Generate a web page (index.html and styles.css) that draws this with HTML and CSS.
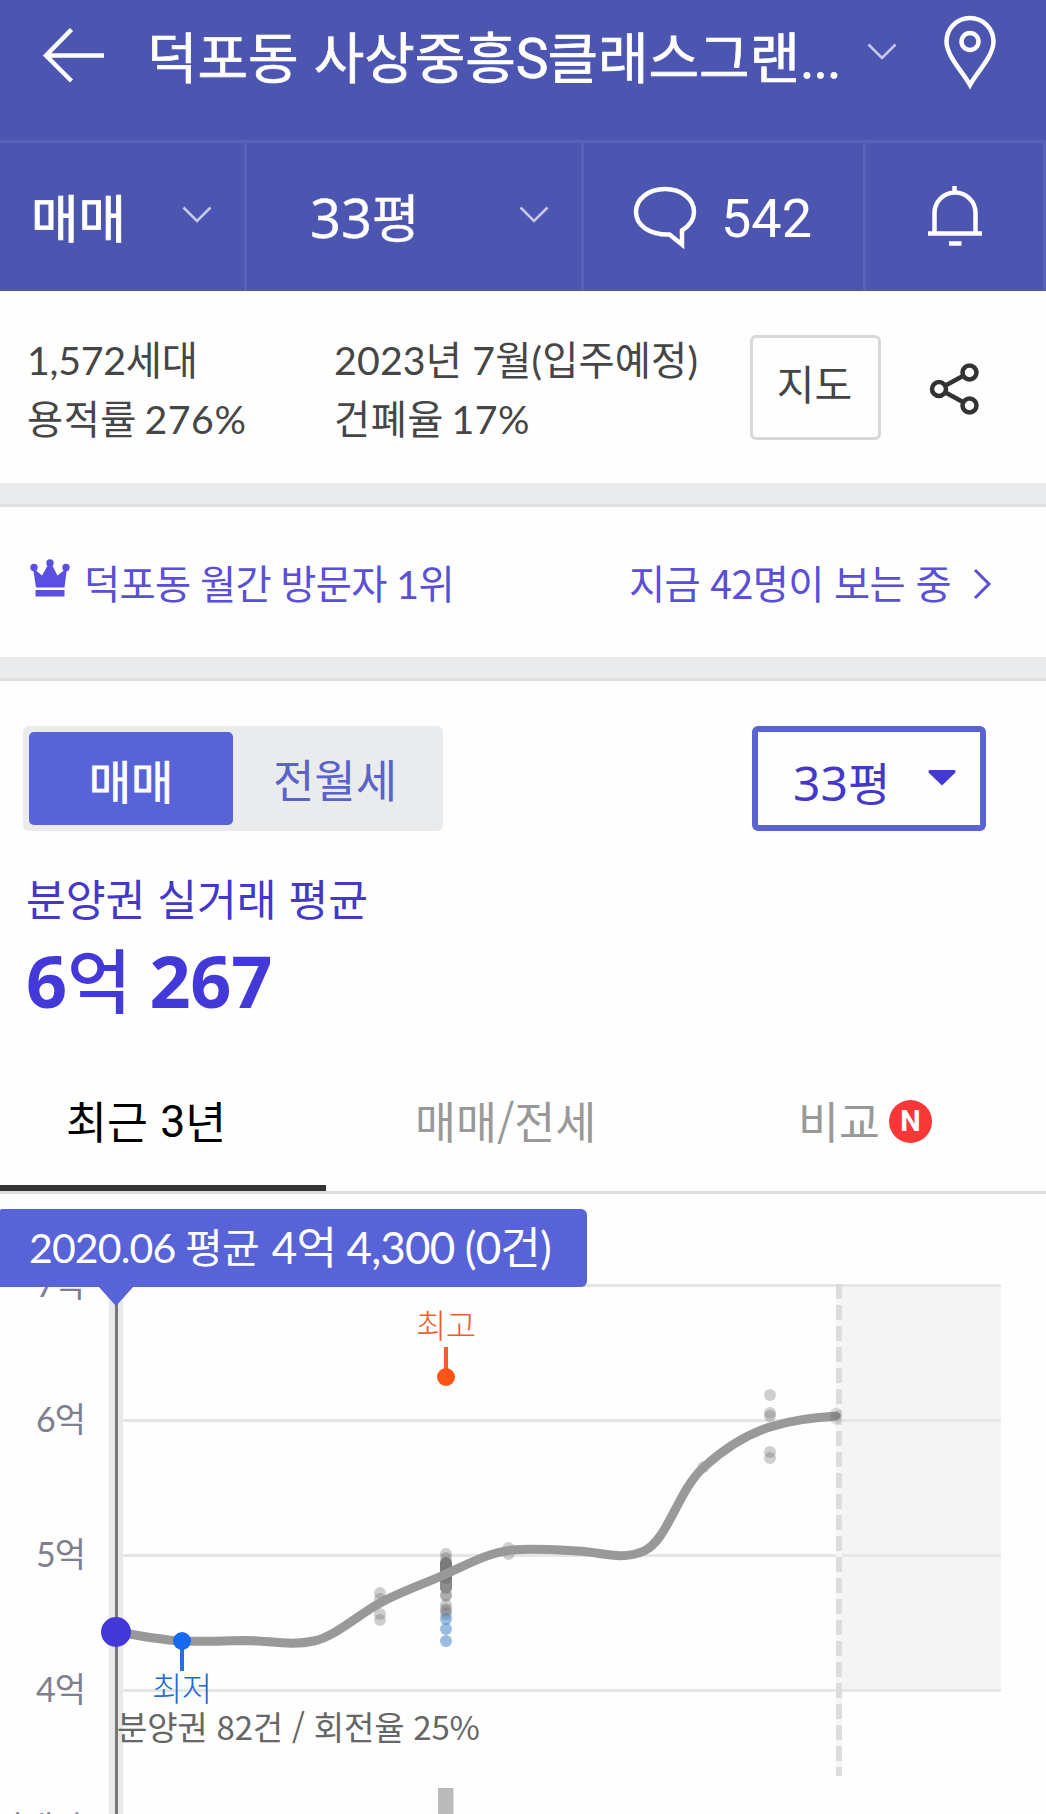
FILE: index.html
```html
<!DOCTYPE html>
<html lang="ko">
<head>
<meta charset="utf-8">
<title>덕포동 사상중흥S클래스그랜드센트럴</title>
<link rel="stylesheet" href="styles.css">
</head>
<body>
<header class="top">
  <div class="title-row">
    <svg class="back" width="62" height="60" viewBox="0 0 62 60"><path d="M62 30.5H4M29.5 4.5L4 30.5L29.5 56" /></svg>
    <h1 class="title">덕포동 사상중흥<span class="roman">S</span>클래스그랜<span class="roman">...</span></h1>
    <svg class="chev title-chev" width="30" height="18" viewBox="0 0 30 18"><path d="M1.5 1.5L15 15L28.500 1.500"/></svg>
    <svg class="pin" width="54" height="76" viewBox="0 0 54 76"><path d="M27 70C20 57 3.500 41 3.500 26.500A23.500 23.500 0 0 1 50.500 26.500C50.500 41 34 57 27 70Z"/><circle cx="27" cy="26.500" r="8.500"/></svg>
  </div>
  <nav class="filter-row">
    <div class="cell deal"><span class="deal-label">매매</span><svg class="chev" width="30" height="18" viewBox="0 0 30 18"><path d="M1.500 1.500L15 15L28.500 1.500"/></svg></div>
    <div class="cell size"><span class="size-label"><span class="num">33</span>평</span><svg class="chev" width="30" height="18" viewBox="0 0 30 18"><path d="M1.500 1.500L15 15L28.500 1.500"/></svg></div>
    <div class="cell talk"><svg class="bubble" width="66" height="66" viewBox="0 0 66 66"><path d="M37.500 49.500L50 59.500V45.500C57 41 62 34.500 62 27C62 14 49.500 4 33 4S4 14 4 27S17 50 37.500 49.500Z"/></svg><span class="count">542</span></div>
    <div class="cell alarm"><svg class="bell" width="56" height="64" viewBox="0 0 56 64"><path d="M27.500 2V9M7.500 49V29A20.500 20.500 0 0 1 48.500 29V49M1 49.500H55"/><path d="M22 59.500H34.500"/></svg></div>
  </nav>
</header>

<section class="summary">
  <div class="facts households"><p>1,572세대</p><p>용적률 276%</p></div>
  <div class="facts movein"><p>2023년 7월(입주예정)</p><p>건폐율 17%</p></div>
  <button class="map-btn">지도</button>
  <svg class="share" width="52" height="54" viewBox="0 0 52 54"><path d="M17.500 23.500L34 14.500M17.500 30.500L34 39.500"/><circle cx="11" cy="27" r="7"/><circle cx="41.500" cy="10.500" r="7"/><circle cx="41.500" cy="43.500" r="7"/></svg>
</section>

<section class="ranking">
  <svg class="crown" width="40" height="38" viewBox="0 0 40 38"><circle cx="4" cy="8.500" r="3.700"/><circle cx="20" cy="4" r="3.700"/><circle cx="36" cy="8.500" r="3.700"/><path d="M3 9L12 16.500L18.500 5H21.500L27.500 16.500L37 9L34.500 28.500H6ZM5.500 31H34.500V37.500H5.500Z"/></svg>
  <span class="rank-text">덕포동 월간 방문자 1위</span>
  <span class="viewing">지금 42명이 보는 중</span>
  <svg class="more" width="20" height="32" viewBox="0 0 20 32"><path d="M2 2L16 16L2 30"/></svg>
</section>

<section class="price">
  <div class="controls">
    <div class="segment"><span class="seg on">매매</span><span class="seg">전월세</span></div>
    <div class="select"><span class="select-label"><span class="num">33</span>평</span><svg class="caret" width="28" height="16" viewBox="0 0 28 16"><path d="M1.500 0H26.500Q28.500 1 27 3L14 15.500L1 3Q-.500 1 1.500 0Z"/></svg></div>
  </div>
  <p class="price-label">분양권 실거래 평균</p>
  <p class="price-value"><span class="num">6</span>억<span class="num"> 267</span></p>
</section>

<nav class="tabs">
  <span class="tab active">최근 <span class="roman">3</span>년</span>
  <span class="tab compare-rent">매매/전세</span>
  <span class="tab compare">비교<i class="new">N</i></span>
</nav>

<section class="chart">
  <svg class="plot" width="1046" height="620" viewBox="0 1194 1046 620">
    <rect x="839" y="1284" width="162" height="408" fill="#f4f4f4"/>
    <g fill="#e6e6e6"><rect x="118" y="1284" width="883" height="3"/><rect x="118" y="1419" width="883" height="3"/><rect x="118" y="1554" width="883" height="3"/><rect x="118" y="1689" width="883" height="3"/></g>
    <path d="M839 1284V1776" stroke="#f6f6f6" stroke-width="6"/>
    <path d="M839 1284V1776" stroke="#ddd" stroke-width="6" stroke-dasharray="15 6"/>
    <g class="axis">
      <text x="36" y="1297" textLength="49">7억</text>
      <text x="36" y="1432" textLength="50">6억</text>
      <text x="36" y="1567" textLength="50">5억</text>
      <text x="36" y="1702" textLength="50">4억</text>
      <text x="-8" y="1841" textLength="92" class="volume">거래량</text>
    </g>
    <rect x="109" y="1287" width="14" height="527" fill="#e8e8e8"/>
    <rect x="115" y="1287" width="3" height="527" fill="#777"/>
    <g fill="#646464" fill-opacity=".3">
      <circle cx="380" cy="1593" r="6"/><circle cx="380" cy="1599" r="6"/><circle cx="380" cy="1614" r="6"/><circle cx="380" cy="1620" r="6"/>
      <circle cx="446" cy="1554" r="6"/><circle cx="446" cy="1558" r="6"/>
      <circle cx="446" cy="1595" r="6"/><circle cx="446" cy="1596" r="6"/><circle cx="446" cy="1605" r="6"/><circle cx="446" cy="1609" r="6"/><circle cx="446" cy="1611" r="6"/><circle cx="446" cy="1614" r="6"/>
      <circle cx="508.500" cy="1548" r="6"/><circle cx="508.500" cy="1554" r="6"/>
      <circle cx="703.500" cy="1467" r="6"/>
      <circle cx="770" cy="1395" r="6"/><circle cx="770" cy="1413" r="6"/><circle cx="770" cy="1416" r="6"/><circle cx="770" cy="1452" r="6"/><circle cx="770" cy="1458" r="6"/>
    </g>
    <g stroke-linecap="round" stroke-width="12"><path d="M446 1578V1588" stroke="#8c8c8c"/><path d="M446 1563V1578" stroke="#7b7b7b"/></g>
    <g fill="#377ac0" fill-opacity=".5"><circle cx="446" cy="1619" r="6"/><circle cx="446" cy="1629" r="6"/><circle cx="446" cy="1641" r="6"/></g>
    <path fill="none" stroke="#999" stroke-width="9" stroke-linecap="round" stroke-linejoin="round" d="M116 1632C138 1635 160 1640 182 1641C204 1642 226 1640.500 248 1640.500C270 1641 292 1646 314 1641C336 1636 358 1615 380 1603S424 1584 446 1574S490 1552 512 1550S556 1550 578 1551S622 1561 644 1551C668 1540 678 1490 704 1467C724 1449 748 1434 770 1427S812 1418 836 1416"/>
    <g fill="#646464" fill-opacity=".2"><circle cx="836" cy="1413.500" r="6"/><circle cx="836" cy="1418.500" r="6"/></g>
    <circle cx="116" cy="1632" r="15" fill="#4338d8"/>
    <path d="M182 1641V1671" stroke="#2470e0" stroke-width="4"/>
    <circle cx="182" cy="1641" r="9" fill="#1769f0"/>
    <text class="low" x="152" y="1701" textLength="60">최저</text>
    <path d="M446 1347V1377" stroke="#f0602c" stroke-width="4"/>
    <circle cx="446" cy="1377" r="9" fill="#ff5418"/>
    <text class="high" x="416" y="1338" textLength="60">최고</text>
    <text class="note" x="117" y="1740" textLength="363">분양권 82건 / 회전율 25%</text>
    <rect x="438" y="1788" width="15.500" height="26" fill="#bbb"/>
  </svg>
  <div class="tip"><span class="tip-date">2020.06 평균</span><span class="tip-value">4억 4,300 (0건)</span></div>
</section>
</body>
</html>
```
FILE: styles.css
```css
* { box-sizing: border-box; margin: 0; padding: 0; }
body {
  width: 1046px;
  height: 1814px;
  overflow: hidden;
  background: #fefefe;
  color: #444;
  font-family: "Noto Sans CJK KR", sans-serif;
  font-weight: 400;
}
svg { display: block; flex: none; fill: none; }
span, p, h1 { white-space: nowrap; }
.roman { font-family: Roboto, sans-serif; }
.num { font-family: "Noto Sans", sans-serif; }

/* header */
.top { height: 291px; background: #4c55b0; color: #fff; }
.title-row { height: 143px; display: flex; align-items: flex-start; border-bottom: 3px solid #5860b8; padding-left: 42px; }
.back { margin-top: 25px; stroke: #fff; stroke-width: 4.500; }
.title { width: 700px; margin: 14px 0 0 43px; font-size: 55px; line-height: 80px; font-weight: 400; -webkit-text-stroke: .7px; letter-spacing: -.1px; }
.title .roman { letter-spacing: -1px; }
.chev { stroke: #c6c8f2; stroke-width: 2.600; }
.title-chev { margin: 43px 0 0 20px; }
.pin { margin: 15px 0 0 46px; stroke: #fff; stroke-width: 4.500; }
.filter-row { height: 148px; display: flex; }
.cell { display: flex; align-items: flex-start; border-right: 3px solid #5860b8; }
.deal { width: 247px; padding-left: 31px; }
.deal-label { width: 151px; margin-top: 35px; font-size: 51.500px; line-height: 76px; -webkit-text-stroke: .9px; }
.cell > .chev { margin-top: 63px; }
.size { width: 337px; padding-left: 63px; }
.size-label { width: 209px; margin-top: 35px; font-size: 52px; line-height: 76px; -webkit-text-stroke: .3px; }
.size-label .num { font-size: 54px; }
.talk { width: 282px; padding-left: 48px; }
.bubble { margin-top: 42px; stroke: #fff; stroke-width: 4.500; }
.count { margin: 38px 0 0 23px; font: 400 54px/76px Roboto, sans-serif; }
.alarm { width: 180px; padding-left: 61px; }
.bell { margin-top: 41px; stroke: #fff; stroke-width: 4.500; }

/* complex facts */
.summary { height: 192px; display: flex; align-items: flex-start; }
.facts { padding-top: 39px; font: 400 39.300px/59px Lato, "Noto Sans CJK KR", sans-serif; color: #464646; }
.facts p + p { letter-spacing: .5px; word-spacing: -3px; }
.households { width: 334px; padding-left: 27px; letter-spacing: -.25px; }
.movein { width: 416px; letter-spacing: .15px; }
.map-btn { width: 131px; height: 105px; margin-top: 44px; padding: 0 2px 11px 0; border: 3px solid #d8d8d8; border-radius: 6px; background: none; color: #444; font: 400 41px/60px "Noto Sans CJK KR", sans-serif; }
.share { margin: 71px 0 0 47px; stroke: #333; stroke-width: 4.500; }

/* ranking */
.ranking { height: 174px; display: flex; align-items: flex-start; border-top: 21px solid #e9ebec; box-shadow: inset 0 3px #e0e0e0; color: #5a4fd6; padding-left: 30px; font: 400 39.300px/60px Lato, "Noto Sans CJK KR", sans-serif; letter-spacing: -.65px; }
.crown { margin-top: 55px; fill: #5a4fe0; }
.rank-text { margin: 50px 0 0 14px; width: 545px; }
.viewing { margin-top: 48px; width: 344px; font-family: "Noto Sans CJK KR", sans-serif; }
.more { margin-top: 64px; stroke: #5a4fd6; stroke-width: 3; }

/* price */
.price { height: 403px; border-top: 21px solid #e9ebec; box-shadow: inset 0 3px #e0e0e0; color: #4338c8; }
.controls { display: flex; justify-content: space-between; padding: 48px 60px 0 23px; }
.segment { display: flex; width: 420px; height: 105px; padding: 6px; border-radius: 6px; background: #e9ebec; }
.seg { flex: 1; text-align: center; font-size: 45px; line-height: 94px; color: #5a63ca; }
.seg.on { flex: none; width: 204px; height: 93px; border-radius: 5px; background: #5863d8; color: #fff; font-size: 46px; -webkit-text-stroke: .7px; }
.select { display: flex; width: 234px; height: 105px; border: 6px solid #5a63d2; border-radius: 6px; padding-left: 35px; }
.select-label { width: 135px; font-size: 46px; line-height: 99px; }
.select-label .num { font-size: 48px; }
.caret { margin-top: 38px; fill: #4338d8; }
.price-label { margin: 36px 0 0 26px; font-size: 43.300px; line-height: 60px; letter-spacing: -.1px; }
.price-value { margin: 9px 0 0 26px; font-size: 70px; line-height: 84px; font-weight: 500; letter-spacing: -.3px; color: #4338d8; }
.price-value .num { font-size: 72px; font-weight: 700; }

/* tabs */
.tabs { height: 134px; display: flex; border-bottom: 3px solid #dcdcdc; font-size: 44.500px; line-height: 122px; color: #999; }
.tab { display: flex; align-items: center; white-space: pre; padding-bottom: 12px; }
.tab.active { width: 326px; padding: 0 0 6px 66px; border-bottom: 6px solid #333; color: #000; }
.tab .roman { position: relative; top: 2px; }
.compare-rent { width: 472px; padding-left: 89px; }
.new { position: relative; top: 2px; width: 43px; height: 43px; margin-left: 9px; border-radius: 50%; background: #fa3737; color: #fff; font: 700 29px/43px Roboto, sans-serif; text-align: center; }

/* chart */
.chart { position: relative; height: 620px; }
.axis { font: 400 34px Lato, "Noto Sans CJK KR", sans-serif; fill: #7f7f8f; }
.low, .high { font: 300 33px "Noto Sans CJK KR", sans-serif; fill: #2068d8; }
.high { fill: #e8602f; }
.note { font: 400 33px "Noto Sans CJK KR", sans-serif; fill: #666; }
.tip { position: absolute; left: 0; top: 15px; width: 587px; height: 78px; padding-left: 29px; display: flex; gap: 13px; border-radius: 2px 6px 6px 0; background: #5863d8; color: #fff; font: 400 41px/77px Lato, "Noto Sans CJK KR", sans-serif; letter-spacing: -.85px; }
.tip-value { font-size: 44px; }
.tip::after { content: ""; position: absolute; left: 98px; top: 77px; border: 18px solid transparent; border-top: 20px solid #5863d8; border-bottom: 0; }
```
